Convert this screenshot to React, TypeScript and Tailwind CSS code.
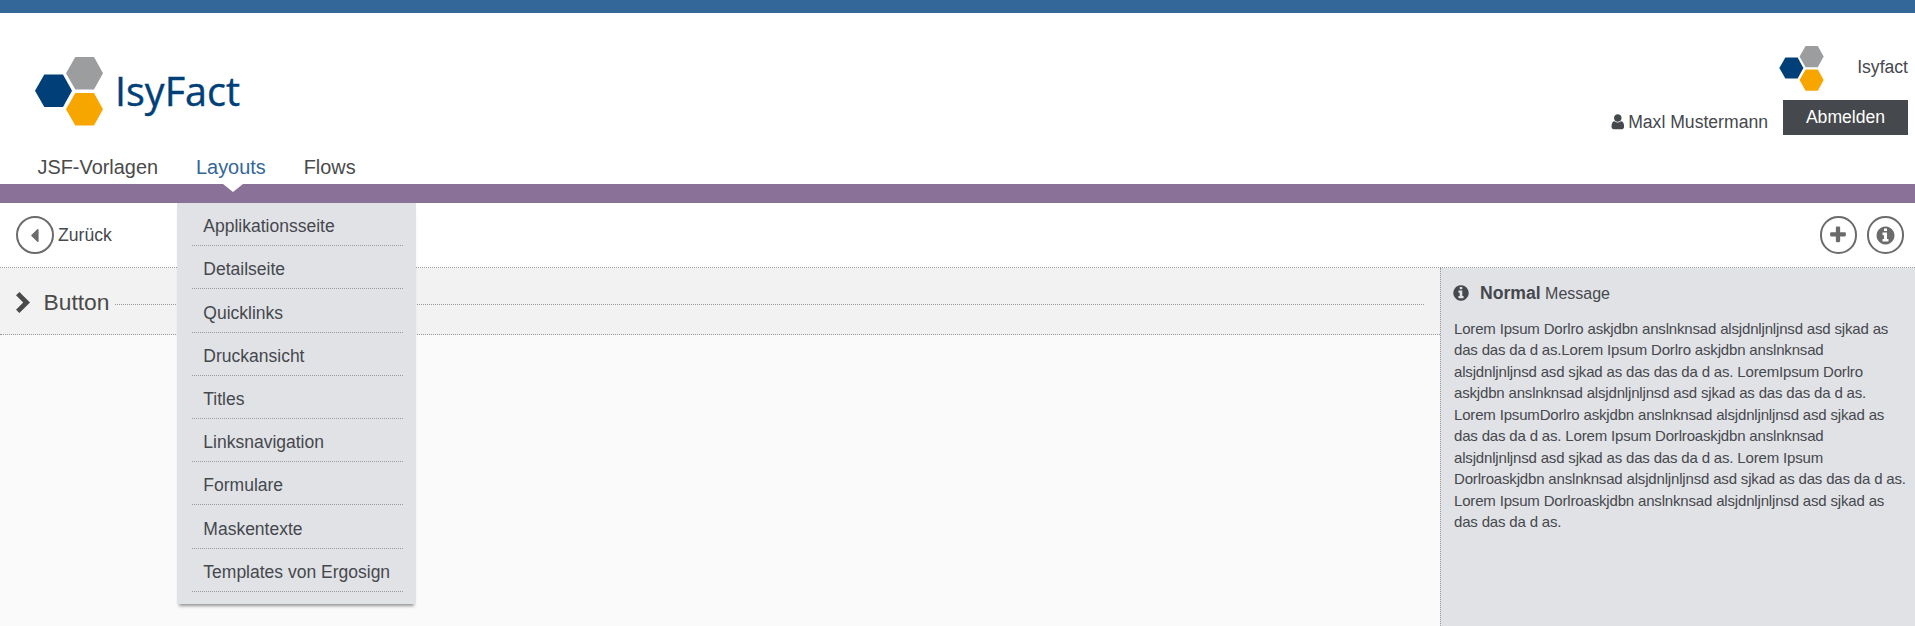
import type { ReactNode } from "react";

const ICONS = {
  info: "M1152 1376v-160q0-14-9-23t-23-9h-96v-512q0-14-9-23t-23-9h-320q-14 0-23 9t-9 23v160q0 14 9 23t23 9h96v320h-96q-14 0-23 9t-9 23v160q0 14 9 23t23 9h448q14 0 23-9t9-23zm-128-896v-160q0-14-9-23t-23-9h-192q-14 0-23 9t-9 23v160q0 14 9 23t23 9h192q14 0 23-9t9-23zm640 416q0 209-103 385.5t-279.5 279.5-385.5 103-385.5-103-279.5-279.5-103-385.5 103-385.5 279.5-279.5 385.5-103 385.5 103 279.5 279.5 103 385.5z",
  plus: "M1600 736v192q0 40-28 68t-68 28h-416v416q0 40-28 68t-68 28h-192q-40 0-68-28t-28-68v-416h-416q-40 0-68-28t-28-68v-192q0-40 28-68t68-28h416v-416q0-40 28-68t68-28h192q40 0 68 28t28 68v416h416q40 0 68 28t28 68z",
  caret: "M1216 448v896q0 26-19 45t-45 19-45-19l-448-448q-19-19-19-45t19-45l448-448q19-19 45-19t45 19 19 45z",
  user: "M1536 1399q0 109-62.5 187t-150.5 78h-854q-88 0-150.5-78t-62.5-187q0-85 8.5-160.5t31.5-152 58.5-131 94-89 134.5-34.5q131 128 313 128t313-128q76 0 134.5 34.5t94 89 58.5 131 31.5 152 8.5 160.5zm-256-887q0 159-112.5 271.5t-271.5 112.5-271.5-112.5-112.5-271.5 112.5-271.5 271.5-112.5 271.5 112.5 112.5 271.5z",
};

function Icon({ name, className }: { name: keyof typeof ICONS; className: string }) {
  return (
    <svg viewBox="0 0 1792 1792" fill="currentColor" className={className}>
      <path d={ICONS[name]} />
    </svg>
  );
}

function Hexagons({ className }: { className: string }) {
  return (
    <svg viewBox="0 0 68 69" className={className}>
      <path d="M9.3 17.5H28L37 33.8 28 50H9.3L0 33.8Z" fill="#003f78" />
      <path d="M40.3 0H59L68 16.2 59 32.5H40.3L31 16.2Z" fill="#9c9d9f" />
      <path d="M40.3 36H59L68 52.3 59 68.5H40.3L31 52.3Z" fill="#f7a600" />
    </svg>
  );
}

function CircleButton({ children }: { children: ReactNode }) {
  return (
    <button className="flex size-[37.5px] items-center justify-center rounded-full border-2 border-[#6b6b6b] text-[#6b6b6b]">
      {children}
    </button>
  );
}

const MENU = [
  "Applikationsseite",
  "Detailseite",
  "Quicklinks",
  "Druckansicht",
  "Titles",
  "Linksnavigation",
  "Formulare",
  "Maskentexte",
  "Templates von Ergosign",
];

const MESSAGE =
  "Lorem Ipsum Dorlro askjdbn anslnknsad alsjdnljnljnsd asd sjkad as das das da d as.Lorem Ipsum Dorlro askjdbn anslnknsad alsjdnljnljnsd asd sjkad as das das da d as. LoremIpsum Dorlro askjdbn anslnknsad alsjdnljnljnsd asd sjkad as das das da d as. Lorem IpsumDorlro askjdbn anslnknsad alsjdnljnljnsd asd sjkad as das das da d as. Lorem Ipsum Dorlroaskjdbn anslnknsad alsjdnljnljnsd asd sjkad as das das da d as. Lorem Ipsum Dorlroaskjdbn anslnknsad alsjdnljnljnsd asd sjkad as das das da d as. Lorem Ipsum Dorlroaskjdbn anslnknsad alsjdnljnljnsd asd sjkad as das das da d as.";

function Dropdown() {
  return (
    <ul className="absolute top-[36px] -left-[19.2px] z-10 h-[401px] w-[239px] bg-[#e1e2e6] pr-[13px] pl-[15px] text-[17.5px] text-[#45484d] shadow-[0_4px_3px_-2px_rgba(0,0,0,0.4)]">
      {MENU.map((item) => (
        <li key={item} className="flex h-[43.2px] items-center border-b border-dotted border-[#999] pt-[5.4px] pl-[11.5px] leading-[25px]">
          {item}
        </li>
      ))}
    </ul>
  );
}

export default function App() {
  return (
    <div className="flex h-[626px] flex-col overflow-hidden bg-[#fafafa] font-['Liberation_Sans',Arial,sans-serif] text-[17.6px] text-[#45484d]">
      <div className="h-[13px] shrink-0 bg-[#336699]" />
      <header className="flex h-[171px] shrink-0 justify-between bg-white">
        <div className="flex flex-col">
          <div className="flex h-[126px] pt-11 pl-[35px]">
            <Hexagons className="h-[69px] w-[68px]" />
            <span className="mt-[10px] ml-3 text-[39.5px] leading-[48px] text-[#003f78] font-['Open_Sans',sans-serif] [-webkit-text-stroke:0.4px_#003f78]">
              IsyFact
            </span>
          </div>
          <nav className="flex gap-[38px] pl-[37.5px] text-[19.9px] leading-[56px] text-[#4a4a4a]">
            <a className="h-[45px]">JSF-Vorlagen</a>
            <div className="relative h-[45px] text-[#336699]">
              Layouts
              <svg viewBox="0 0 20 8" className="absolute top-[45px] left-[27px] h-2 w-5">
                <path d="M0 0H20L10 8Z" fill="#fff" />
              </svg>
              <div className="absolute top-[28px] left-0">
                <Dropdown />
              </div>
            </div>
            <a className="h-[45px]">Flows</a>
          </nav>
        </div>
        <div className="flex flex-col items-end pr-[7px]">
          <div className="flex h-[87px] pt-[33px]">
            <Hexagons className="h-[45px] w-[45px]" />
            <span className="ml-[33px] pt-[9px] leading-[25px]">Isyfact</span>
          </div>
          <div className="flex">
            <Icon name="user" className="mt-[13px] mr-[2px] size-[17.6px]" />
            <span className="mr-[15px] pt-[10px] leading-[25px]">Maxl Mustermann</span>
            <button className="h-[35px] w-[125px] bg-[#45484d] text-white">Abmelden</button>
          </div>
        </div>
      </header>
      <div className="h-[19px] shrink-0 bg-[#8a7198]" />
      <div className="flex h-[65px] shrink-0 items-center justify-between border-b border-dotted border-[#999] bg-white pr-[11px] pl-4">
        <div className="flex items-center gap-[4.5px]">
          <CircleButton>
            <Icon name="caret" className="size-[23px]" />
          </CircleButton>
          <span>Zurück</span>
        </div>
        <div className="flex gap-[9.5px]">
          <CircleButton>
            <Icon name="plus" className="size-[20px]" />
          </CircleButton>
          <CircleButton>
            <Icon name="info" className="size-[21px]" />
          </CircleButton>
        </div>
      </div>
      <div className="flex flex-1">
        <main className="flex-1">
          <div className="flex h-[67px] items-center border-b border-dotted border-[#999] bg-[#f2f2f2] pt-[2px] pr-4 pl-4">
            <svg viewBox="0 0 14 21" className="h-[21px] w-[14px]">
              <path d="M0 3.2 3.4 0 14 10.5 3.4 21 0 17.8 7.2 10.5Z" fill="#4a4a4a" />
            </svg>
            <h2 className="ml-[13.5px] text-[22.8px] text-[#4a4a4a]">Button</h2>
            <div className="mt-1 ml-[6px] flex-1 border-t border-dotted border-[#999]" />
          </div>
        </main>
        <aside className="w-[475px] border-l border-dotted border-[#999] bg-[#e1e2e6] pr-2 pl-[11px]">
          <div className="flex h-[50px] items-center">
            <Icon name="info" className="size-[18px]" />
            <p className="ml-[10px] text-[16px]">
              <b className="text-[17.6px]">Normal</b> Message
            </p>
          </div>
          <p className="pl-[2px] text-[15px] leading-[21.43px] tracking-[-0.17px]">{MESSAGE}</p>
        </aside>
      </div>
    </div>
  );
}
